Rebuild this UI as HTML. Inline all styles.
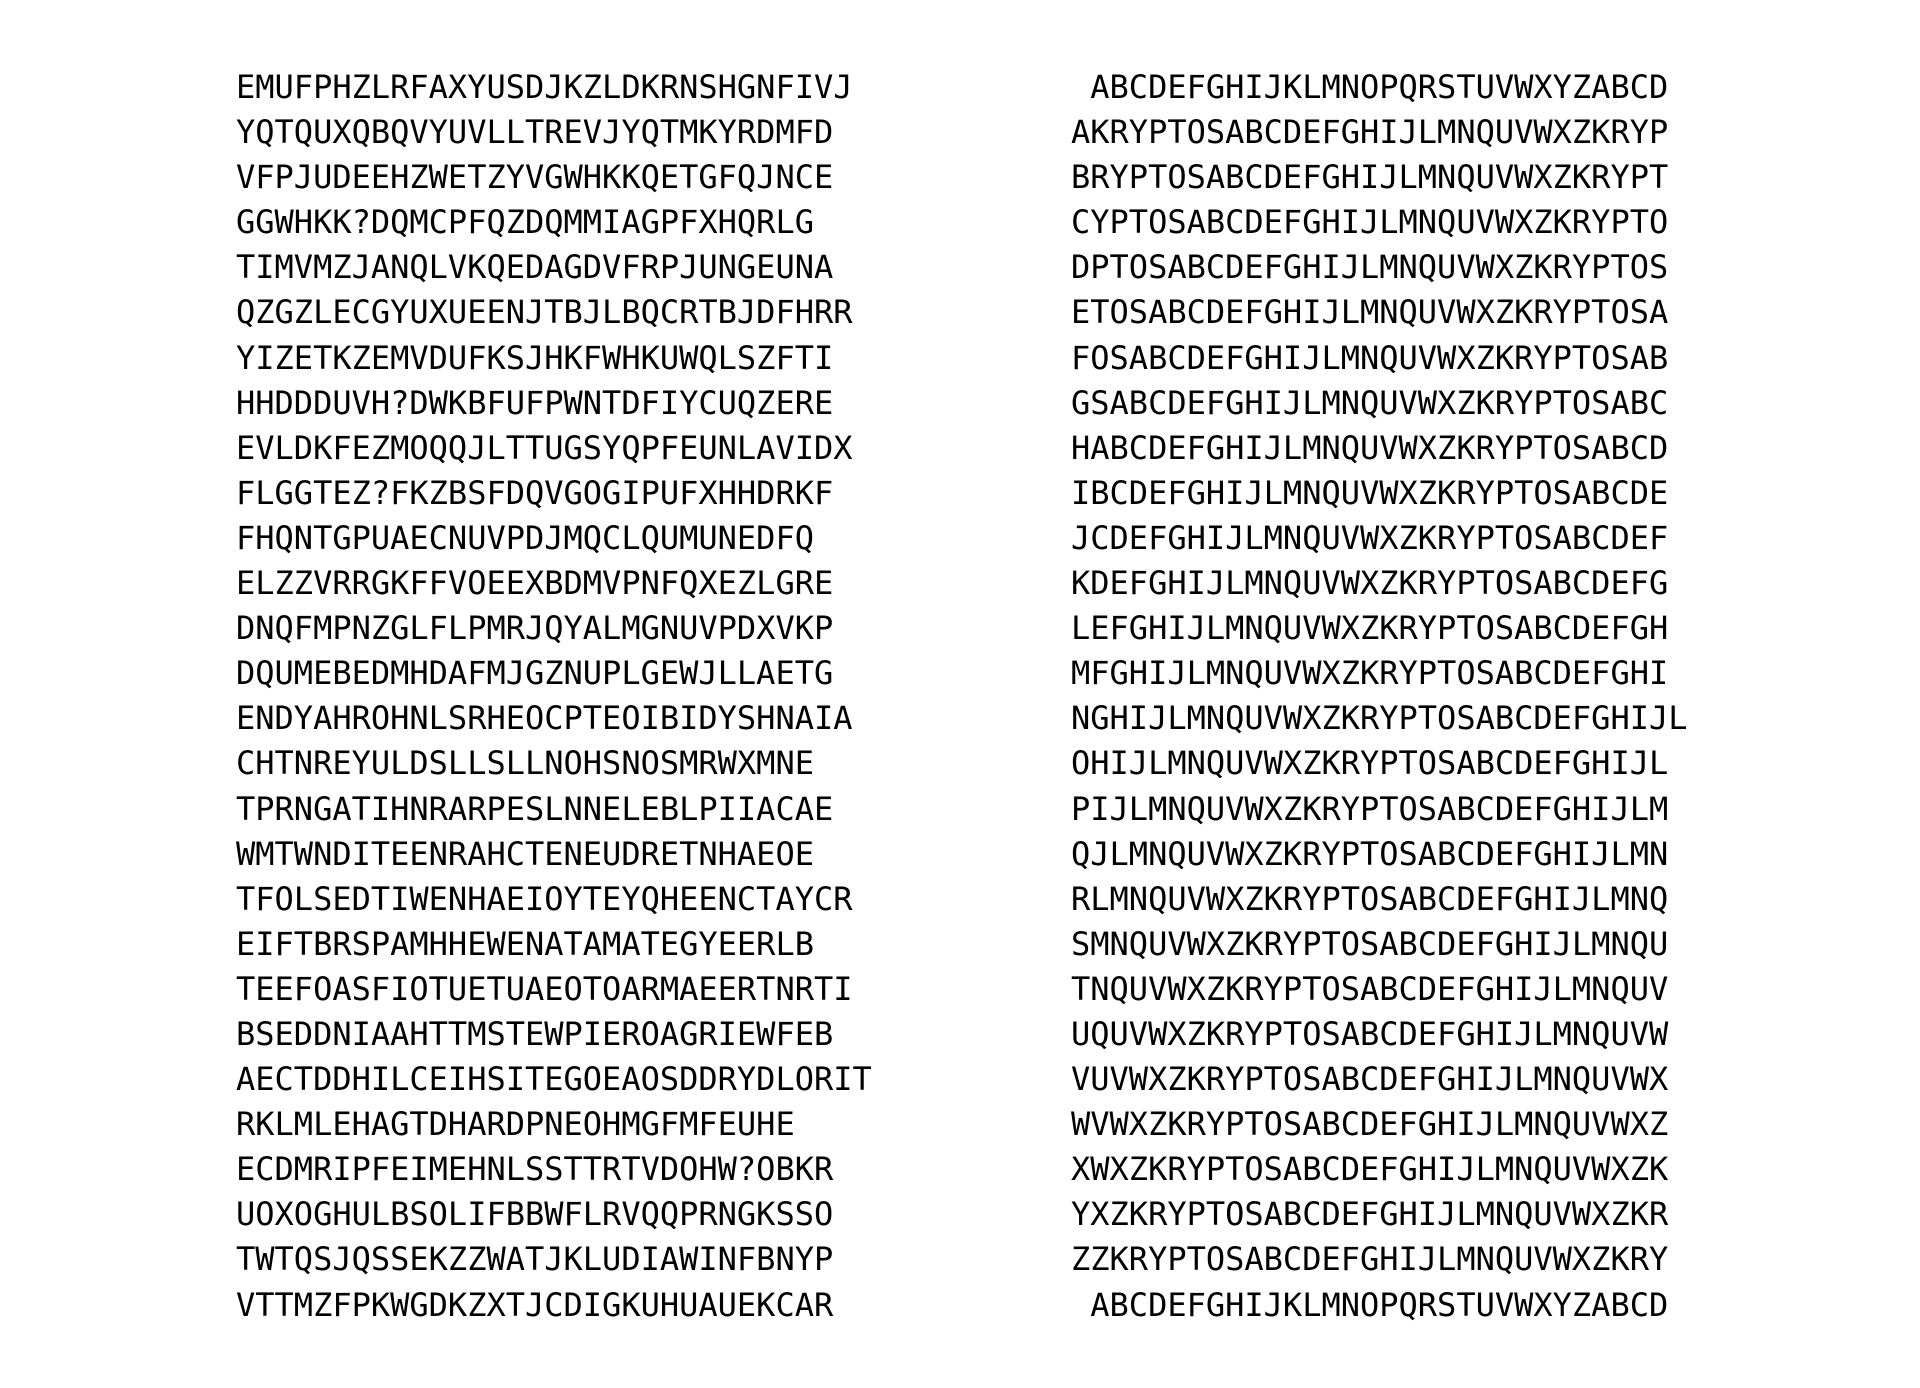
<!DOCTYPE html>
<html><head><meta charset="utf-8"><style>
html,body{margin:0;padding:0;background:#fff;width:1920px;height:1388px;overflow:hidden}
pre{position:absolute;top:65px;margin:0;font-family:"DejaVu Sans Mono","Liberation Mono",monospace;font-size:32px;letter-spacing:0;line-height:45.1px;color:#000}
#l{left:236px}#r{left:1071px}
</style></head><body>
<pre id="l">EMUFPHZLRFAXYUSDJKZLDKRNSHGNFIVJ
YQTQUXQBQVYUVLLTREVJYQTMKYRDMFD
VFPJUDEEHZWETZYVGWHKKQETGFQJNCE
GGWHKK?DQMCPFQZDQMMIAGPFXHQRLG
TIMVMZJANQLVKQEDAGDVFRPJUNGEUNA
QZGZLECGYUXUEENJTBJLBQCRTBJDFHRR
YIZETKZEMVDUFKSJHKFWHKUWQLSZFTI
HHDDDUVH?DWKBFUFPWNTDFIYCUQZERE
EVLDKFEZMOQQJLTTUGSYQPFEUNLAVIDX
FLGGTEZ?FKZBSFDQVGOGIPUFXHHDRKF
FHQNTGPUAECNUVPDJMQCLQUMUNEDFQ
ELZZVRRGKFFVOEEXBDMVPNFQXEZLGRE
DNQFMPNZGLFLPMRJQYALMGNUVPDXVKP
DQUMEBEDMHDAFMJGZNUPLGEWJLLAETG
ENDYAHROHNLSRHEOCPTEOIBIDYSHNAIA
CHTNREYULDSLLSLLNOHSNOSMRWXMNE
TPRNGATIHNRARPESLNNELEBLPIIACAE
WMTWNDITEENRAHCTENEUDRETNHAEOE
TFOLSEDTIWENHAEIOYTEYQHEENCTAYCR
EIFTBRSPAMHHEWENATAMATEGYEERLB
TEEFOASFIOTUETUAEOTOARMAEERTNRTI
BSEDDNIAAHTTMSTEWPIEROAGRIEWFEB
AECTDDHILCEIHSITEGOEAOSDDRYDLORIT
RKLMLEHAGTDHARDPNEOHMGFMFEUHE
ECDMRIPFEIMEHNLSSTTRTVDOHW?OBKR
UOXOGHULBSOLIFBBWFLRVQQPRNGKSSO
TWTQSJQSSEKZZWATJKLUDIAWINFBNYP
VTTMZFPKWGDKZXTJCDIGKUHUAUEKCAR</pre>
<pre id="r"> ABCDEFGHIJKLMNOPQRSTUVWXYZABCD
AKRYPTOSABCDEFGHIJLMNQUVWXZKRYP
BRYPTOSABCDEFGHIJLMNQUVWXZKRYPT
CYPTOSABCDEFGHIJLMNQUVWXZKRYPTO
DPTOSABCDEFGHIJLMNQUVWXZKRYPTOS
ETOSABCDEFGHIJLMNQUVWXZKRYPTOSA
FOSABCDEFGHIJLMNQUVWXZKRYPTOSAB
GSABCDEFGHIJLMNQUVWXZKRYPTOSABC
HABCDEFGHIJLMNQUVWXZKRYPTOSABCD
IBCDEFGHIJLMNQUVWXZKRYPTOSABCDE
JCDEFGHIJLMNQUVWXZKRYPTOSABCDEF
KDEFGHIJLMNQUVWXZKRYPTOSABCDEFG
LEFGHIJLMNQUVWXZKRYPTOSABCDEFGH
MFGHIJLMNQUVWXZKRYPTOSABCDEFGHI
NGHIJLMNQUVWXZKRYPTOSABCDEFGHIJL
OHIJLMNQUVWXZKRYPTOSABCDEFGHIJL
PIJLMNQUVWXZKRYPTOSABCDEFGHIJLM
QJLMNQUVWXZKRYPTOSABCDEFGHIJLMN
RLMNQUVWXZKRYPTOSABCDEFGHIJLMNQ
SMNQUVWXZKRYPTOSABCDEFGHIJLMNQU
TNQUVWXZKRYPTOSABCDEFGHIJLMNQUV
UQUVWXZKRYPTOSABCDEFGHIJLMNQUVW
VUVWXZKRYPTOSABCDEFGHIJLMNQUVWX
WVWXZKRYPTOSABCDEFGHIJLMNQUVWXZ
XWXZKRYPTOSABCDEFGHIJLMNQUVWXZK
YXZKRYPTOSABCDEFGHIJLMNQUVWXZKR
ZZKRYPTOSABCDEFGHIJLMNQUVWXZKRY
 ABCDEFGHIJKLMNOPQRSTUVWXYZABCD</pre>
</body></html>
